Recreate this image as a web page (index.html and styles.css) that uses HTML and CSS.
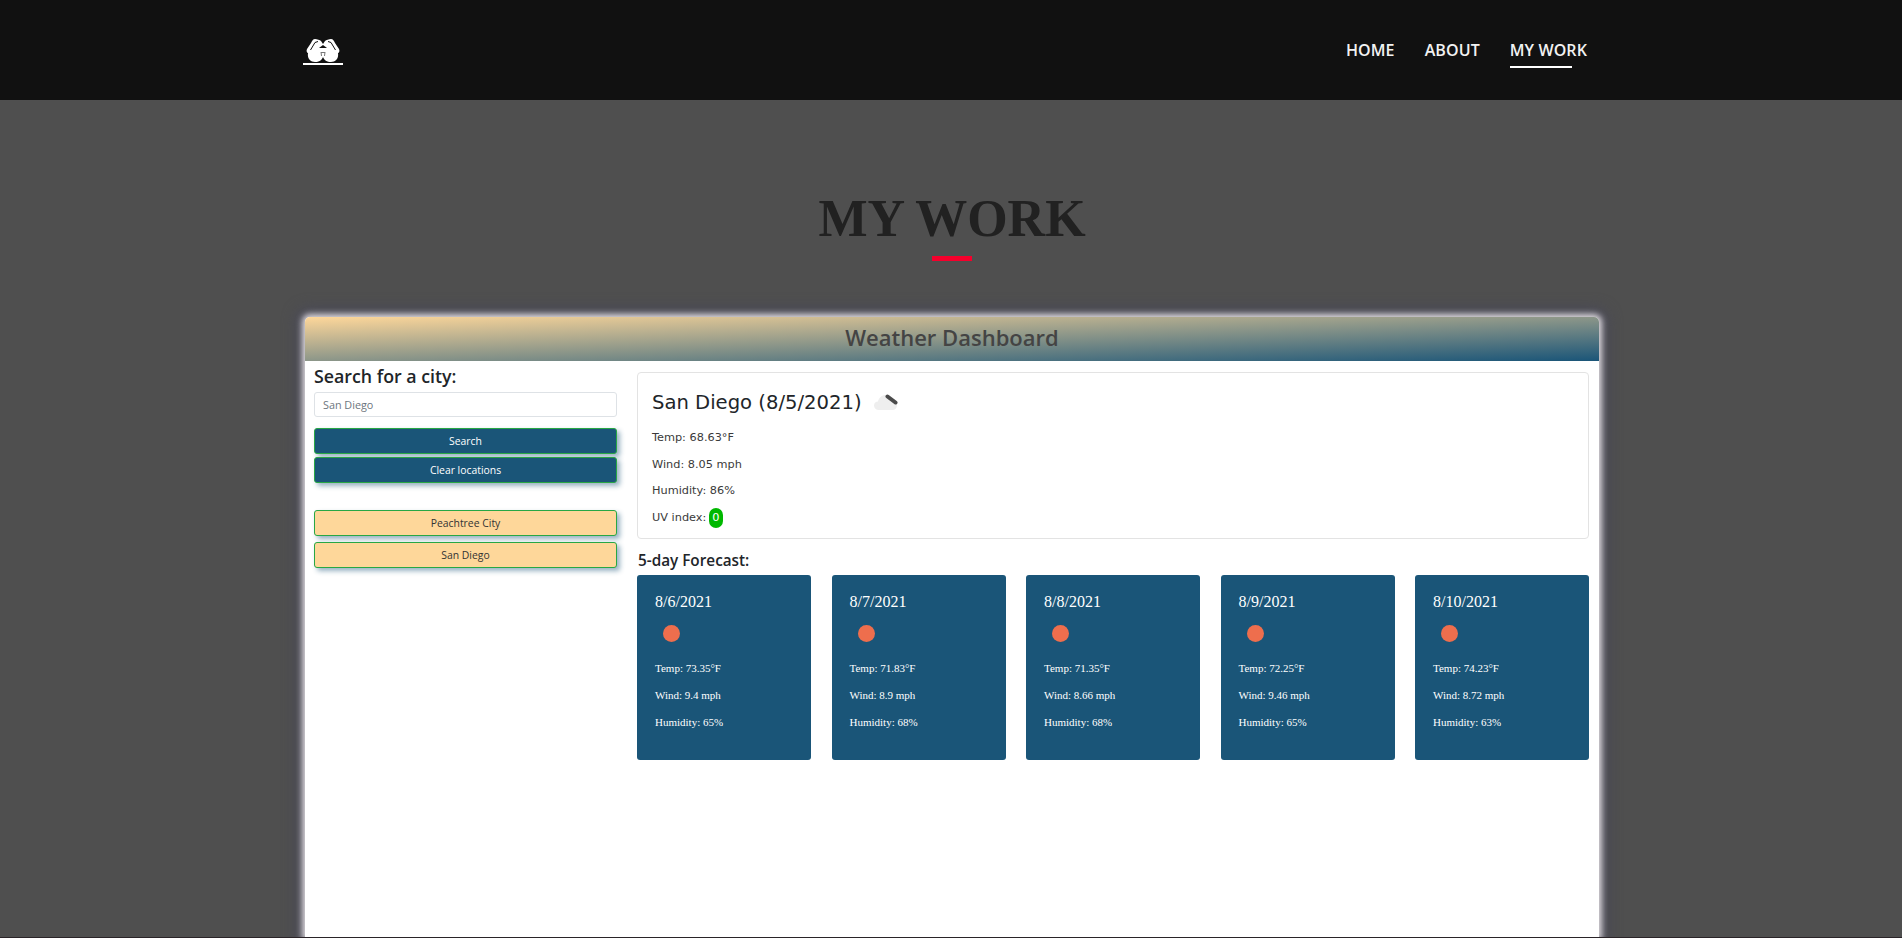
FILE: index.html
```html
<!DOCTYPE html>
<html lang="en">
<head>
    <meta charset="UTF-8">
    <meta name="viewport" content="width=device-width, initial-scale=1.0">
    <title>My Work</title>
    <link rel="stylesheet" href="styles.css">
</head>
<body>
    <header class="site-header">
        <a class="logo" href="#">
            <svg viewBox="0 0 34 23" width="34" height="23" fill="#fff">
                <path d="M9 0 C11 0 14 1 15 2 L17 5 L19 2 C20 1 23 0 25 0 C27 0 28 2 29 4 L33 10 C34 12 33 14 32 14 C33 20 29 23 25 23 C21 23 18 21 17 18 C16 21 13 23 9 23 C5 23 1 20 2 14 C1 14 0 12 1 10 L5 4 C6 2 7 0 9 0 Z"/>
                <path d="M13 9 L17 6 L21 9 Z" fill="#111"/>
                <path d="M4.5 11 L9 3.5 L12 2.5 M29.5 11 L25 3.5 L22 2.5" fill="none" stroke="#111" stroke-width="1"/>
                <path d="M15 13 L15.5 17 M19 13 L18.5 17 M15 13.5 H19" fill="none" stroke="#777" stroke-width="1"/>
            </svg>
        </a>
        <nav class="site-nav">
            <a href="#">HOME</a>
            <a href="#">ABOUT</a>
            <a class="active" href="#">MY WORK</a>
        </nav>
    </header>

    <main class="work">
        <h1 class="work-title">MY WORK</h1>
        <div class="title-bar"></div>

        <section class="panel">
            <h2 class="panel-header">Weather Dashboard</h2>
            <div class="dashboard">
                <aside class="search-col">
                    <h3 class="search-title">Search for a city:</h3>
                    <input class="search-input" type="text" value="San Diego">
                    <button class="btn btn-blue">Search</button>
                    <button class="btn btn-blue">Clear locations</button>
                    <div class="history">
                        <button class="btn btn-peach">Peachtree City</button>
                        <button class="btn btn-peach">San Diego</button>
                    </div>
                </aside>
                <div class="results">
                    <div class="today">
                        <div class="today-head">
                            <span>San Diego (8/5/2021)</span>
                            <svg class="cloud" viewBox="0 0 24 16" width="24" height="16">
                                <path d="M5 16 C2 16 0 14 0 11.5 C0 9 2 7.5 4 7.5 C5 3.5 8 1 11.5 1 C15 1 18 3.5 18.5 7 C21 7 23 9 23 11.5 C23 14 21 16 18.5 16 Z" fill="#eeeeee"/>
                                <path d="M13.5 2.5 L21.5 8.5" stroke="#4a4a4a" stroke-width="4" stroke-linecap="round" fill="none"/>
                            </svg>
                        </div>
                        <p>Temp: 68.63°F</p>
                        <p>Wind: 8.05 mph</p>
                        <p>Humidity: 86%</p>
                        <p>UV index: <span class="uv">0</span></p>
                    </div>
                    <h4 class="forecast-title">5-day Forecast:</h4>
                    <div class="forecast">
                        <div class="day">
                            <div class="day-date">8/6/2021</div>
                            <div class="sun"></div>
                            <p>Temp: 73.35°F</p>
                            <p>Wind: 9.4 mph</p>
                            <p>Humidity: 65%</p>
                        </div>
                        <div class="day">
                            <div class="day-date">8/7/2021</div>
                            <div class="sun"></div>
                            <p>Temp: 71.83°F</p>
                            <p>Wind: 8.9 mph</p>
                            <p>Humidity: 68%</p>
                        </div>
                        <div class="day">
                            <div class="day-date">8/8/2021</div>
                            <div class="sun"></div>
                            <p>Temp: 71.35°F</p>
                            <p>Wind: 8.66 mph</p>
                            <p>Humidity: 68%</p>
                        </div>
                        <div class="day">
                            <div class="day-date">8/9/2021</div>
                            <div class="sun"></div>
                            <p>Temp: 72.25°F</p>
                            <p>Wind: 9.46 mph</p>
                            <p>Humidity: 65%</p>
                        </div>
                        <div class="day">
                            <div class="day-date">8/10/2021</div>
                            <div class="sun"></div>
                            <p>Temp: 74.23°F</p>
                            <p>Wind: 8.72 mph</p>
                            <p>Humidity: 63%</p>
                        </div>
                    </div>
                </div>
            </div>
        </section>
    </main>
    <footer class="site-footer"></footer>
</body>
</html>
```

FILE: styles.css
```css
* {
    box-sizing: border-box;
}
html, body {
    height: 100%;
    overflow: hidden;
}
body {
    margin: 0;
    display: flex;
    flex-direction: column;
    background-color: #4f4f4f;
    font-family: "Open Sans", sans-serif;
}
.site-header {
    flex: none;
    height: 100px;
    display: flex;
    align-items: flex-start;
    justify-content: space-between;
    padding: 39px 315px 0 303px;
    background-color: #111;
}
.logo {
    display: flex;
    justify-content: center;
    width: 40px;
    height: 26px;
    border-bottom: 2px solid #fff;
}
.site-nav {
    display: flex;
    gap: 30px;
}
.site-nav a {
    color: #f2f2f2;
    font-size: 16px;
    font-weight: 600;
    letter-spacing: 0.1px;
    line-height: 22px;
    text-decoration: none;
}
.site-nav a.active::after {
    content: "";
    display: block;
    width: 80%;
    height: 2px;
    margin-top: 5px;
    background-color: #fff;
}
.work {
    flex: 1;
    display: flex;
    flex-direction: column;
    align-items: center;
    min-height: 0;
}
.work-title {
    margin: 86px 0 0 2px;
    color: #212121;
    font-family: "Liberation Serif", serif;
    font-size: 52px;
    font-weight: 700;
    line-height: 66px;
}
.title-bar {
    width: 40px;
    height: 5px;
    margin: 4px 0 0 1px;
    background-color: #f5002c;
}
.panel {
    flex: 1;
    width: 1294px;
    margin-top: 56px;
    margin-left: 2px;
    border-radius: 5px 5px 0 0;
    background-color: #fff;
    box-shadow: 0 0 6px 3px #e0dce0, 0 0 14px 9px #4a4a58;
}
.panel-header {
    height: 44px;
    margin: 0;
    border-radius: 5px 5px 0 0;
    background: linear-gradient(to bottom right, #fed79a, #1a5578);
    color: #444;
    font-size: 22px;
    font-weight: 600;
    line-height: 41px;
    text-align: center;
}
.dashboard {
    display: flex;
    gap: 20px;
    padding: 0 10px 0 9px;
}
.search-col {
    flex: none;
    display: flex;
    flex-direction: column;
    width: 303px;
}
.search-title {
    margin: 3px 0 4px;
    color: #212529;
    font-size: 17.8px;
    font-weight: 600;
    line-height: 24px;
}
.search-input {
    height: 25px;
    margin-bottom: 11px;
    padding: 0 8px;
    border: 1px solid #dee2e6;
    border-radius: 3px;
    color: #6c757d;
    font-family: "Open Sans", sans-serif;
    font-size: 10.8px;
}
.btn {
    height: 26px;
    margin-bottom: 3px;
    padding: 0 0 1px;
    border: 1px solid #28a745;
    border-radius: 3px;
    font-family: "Open Sans", sans-serif;
    font-size: 10.4px;
    box-shadow: 3px 3px 5px rgba(26, 85, 120, 0.45);
}
.btn-blue {
    background-color: #1a5578;
    color: #fff;
}
.btn-peach {
    background-color: #fed79a;
    color: #333;
}
.history {
    display: flex;
    flex-direction: column;
    gap: 3px;
    margin-top: 24px;
}
.history .btn {
    margin-bottom: 3px;
}
.results {
    flex: 1;
    padding-top: 11px;
}
.today {
    height: 167px;
    padding: 13px 14px 0;
    border: 1px solid #e3e3e3;
    border-radius: 4px;
    color: #3a3a3a;
    font-family: "DejaVu Sans", sans-serif;
    font-size: 11.3px;
}
.today p {
    height: 26.7px;
    margin: 0;
    line-height: 26.7px;
}
.today-head {
    display: flex;
    align-items: center;
    gap: 12px;
    height: 32px;
    margin-bottom: 7px;
    color: #212529;
    font-size: 19.6px;
}
.uv {
    display: inline-block;
    width: 14px;
    height: 20px;
    margin-left: -1px;
    border-radius: 7px;
    background-color: #00b800;
    color: #fff;
    line-height: 20px;
    text-align: center;
}
.forecast-title {
    margin: 11px 0 5px 1px;
    color: #212529;
    font-size: 15.3px;
    font-weight: 600;
    line-height: 20px;
}
.forecast {
    display: grid;
    grid-template-columns: repeat(5, 174px);
    justify-content: space-between;
}
.day {
    height: 185px;
    padding: 16px 18px 0;
    border-radius: 3px;
    background-color: #1a5578;
    color: #fff;
    font-family: "Liberation Serif", serif;
    font-size: 11px;
}
.day p {
    height: 27px;
    margin: 0;
    line-height: 27px;
}
.day-date {
    font-size: 16px;
    line-height: 22px;
}
.sun {
    width: 17px;
    height: 17px;
    margin: 12px 0 13px 8px;
    border-radius: 50%;
    background-color: #ee6e4d;
}
.site-footer {
    flex: none;
    position: relative;
    height: 1px;
    background-color: #2a2428;
}
```
